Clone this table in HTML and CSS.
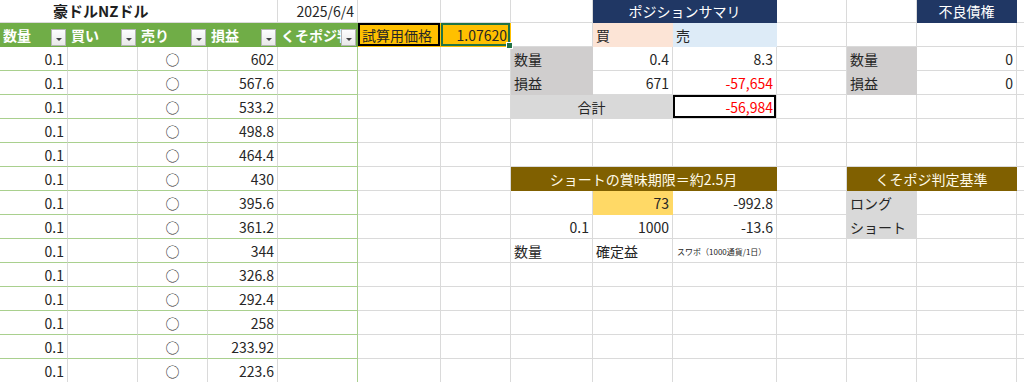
FILE: index.html
```html
<!DOCTYPE html>
<html lang="ja">
<head>
<meta charset="utf-8">
<title>豪ドルNZドル</title>
<link rel="stylesheet" href="styles.css">
</head>
<body>
<div class="sheet">
  <!-- row 1 -->
  <div class="cell title span4">豪ドルNZドル</div>
  <div class="cell r date">2025/6/4</div>
  <div class="cell"></div><div class="cell"></div><div class="cell"></div>
  <div class="cell navy span2">ポジションサマリ</div>
  <div class="cell"></div><div class="cell"></div>
  <div class="cell navy">不良債権</div>
  <div class="cell last"></div>

  <!-- row 2 -->
  <div class="cell hdr"><span class="ht">数量</span><span class="fb"><span class="tri"></span></span></div>
  <div class="cell hdr"><span class="ht">買い</span><span class="fb"><span class="tri"></span></span></div>
  <div class="cell hdr"><span class="ht">売り</span><span class="fb"><span class="tri"></span></span></div>
  <div class="cell hdr"><span class="ht">損益</span><span class="fb"><span class="tri"></span></span></div>
  <div class="cell hdr"><span class="ht">くそポジ判定</span><span class="fb"><span class="tri"></span></span></div>
  <div class="cell price-label">試算用価格</div>
  <div class="cell price-input r">1.07620</div>
  <div class="cell"></div>
  <div class="cell peach">買</div>
  <div class="cell blue">売</div>
  <div class="cell"></div><div class="cell"></div><div class="cell"></div>
  <div class="cell last"></div>

  <!-- row 3 -->
  <div class="cell t r">0.1</div><div class="cell t"></div><div class="cell t c">○</div><div class="cell t r">602</div><div class="cell t te"></div>
  <div class="cell"></div><div class="cell"></div>
  <div class="cell gray">数量</div>
  <div class="cell r">0.4</div>
  <div class="cell r">8.3</div>
  <div class="cell"></div>
  <div class="cell gray">数量</div>
  <div class="cell r">0</div>
  <div class="cell last"></div>

  <!-- row 4 -->
  <div class="cell t r">0.1</div><div class="cell t"></div><div class="cell t c">○</div><div class="cell t r">567.6</div><div class="cell t te"></div>
  <div class="cell"></div><div class="cell"></div>
  <div class="cell gray">損益</div>
  <div class="cell r">671</div>
  <div class="cell r neg">-57,654</div>
  <div class="cell"></div>
  <div class="cell gray">損益</div>
  <div class="cell r">0</div>
  <div class="cell last"></div>

  <!-- row 5 -->
  <div class="cell t r">0.1</div><div class="cell t"></div><div class="cell t c">○</div><div class="cell t r">533.2</div><div class="cell t te"></div>
  <div class="cell"></div><div class="cell"></div>
  <div class="cell light span2 c">合計</div>
  <div class="cell r neg total">-56,984</div>
  <div class="cell"></div><div class="cell"></div><div class="cell"></div>
  <div class="cell last"></div>

  <!-- row 6 -->
  <div class="cell t r">0.1</div><div class="cell t"></div><div class="cell t c">○</div><div class="cell t r">498.8</div><div class="cell t te"></div>
  <div class="cell"></div><div class="cell"></div><div class="cell"></div><div class="cell"></div><div class="cell"></div><div class="cell"></div><div class="cell"></div><div class="cell"></div>
  <div class="cell last"></div>

  <!-- row 7 -->
  <div class="cell t r">0.1</div><div class="cell t"></div><div class="cell t c">○</div><div class="cell t r">464.4</div><div class="cell t te"></div>
  <div class="cell"></div><div class="cell"></div><div class="cell"></div><div class="cell"></div><div class="cell"></div><div class="cell"></div><div class="cell"></div><div class="cell"></div>
  <div class="cell last"></div>

  <!-- row 8 -->
  <div class="cell t r">0.1</div><div class="cell t"></div><div class="cell t c">○</div><div class="cell t r">430</div><div class="cell t te"></div>
  <div class="cell"></div><div class="cell"></div>
  <div class="cell brown span3">ショートの賞味期限＝約2.5月</div>
  <div class="cell"></div>
  <div class="cell brown span2">くそポジ判定基準</div>
  <div class="cell last"></div>

  <!-- row 9 -->
  <div class="cell t r">0.1</div><div class="cell t"></div><div class="cell t c">○</div><div class="cell t r">395.6</div><div class="cell t te"></div>
  <div class="cell"></div><div class="cell"></div><div class="cell"></div>
  <div class="cell yellow r">73</div>
  <div class="cell r">-992.8</div>
  <div class="cell"></div>
  <div class="cell light">ロング</div>
  <div class="cell"></div>
  <div class="cell last"></div>

  <!-- row 10 -->
  <div class="cell t r">0.1</div><div class="cell t"></div><div class="cell t c">○</div><div class="cell t r">361.2</div><div class="cell t te"></div>
  <div class="cell"></div><div class="cell"></div>
  <div class="cell r">0.1</div>
  <div class="cell r">1000</div>
  <div class="cell r">-13.6</div>
  <div class="cell"></div>
  <div class="cell light">ショート</div>
  <div class="cell"></div>
  <div class="cell last"></div>

  <!-- row 11 -->
  <div class="cell t r">0.1</div><div class="cell t"></div><div class="cell t c">○</div><div class="cell t r">344</div><div class="cell t te"></div>
  <div class="cell"></div><div class="cell"></div>
  <div class="cell">数量</div>
  <div class="cell">確定益</div>
  <div class="cell small">スワポ（1000通貨/1日）</div>
  <div class="cell"></div><div class="cell"></div><div class="cell"></div>
  <div class="cell last"></div>

  <!-- row 12 -->
  <div class="cell t r">0.1</div><div class="cell t"></div><div class="cell t c">○</div><div class="cell t r">326.8</div><div class="cell t te"></div>
  <div class="cell"></div><div class="cell"></div><div class="cell"></div><div class="cell"></div><div class="cell"></div><div class="cell"></div><div class="cell"></div><div class="cell"></div>
  <div class="cell last"></div>

  <!-- row 13 -->
  <div class="cell t r">0.1</div><div class="cell t"></div><div class="cell t c">○</div><div class="cell t r">292.4</div><div class="cell t te"></div>
  <div class="cell"></div><div class="cell"></div><div class="cell"></div><div class="cell"></div><div class="cell"></div><div class="cell"></div><div class="cell"></div><div class="cell"></div>
  <div class="cell last"></div>

  <!-- row 14 -->
  <div class="cell t r">0.1</div><div class="cell t"></div><div class="cell t c">○</div><div class="cell t r">258</div><div class="cell t te"></div>
  <div class="cell"></div><div class="cell"></div><div class="cell"></div><div class="cell"></div><div class="cell"></div><div class="cell"></div><div class="cell"></div><div class="cell"></div>
  <div class="cell last"></div>

  <!-- row 15 -->
  <div class="cell t r">0.1</div><div class="cell t"></div><div class="cell t c">○</div><div class="cell t r">233.92</div><div class="cell t te"></div>
  <div class="cell"></div><div class="cell"></div><div class="cell"></div><div class="cell"></div><div class="cell"></div><div class="cell"></div><div class="cell"></div><div class="cell"></div>
  <div class="cell last"></div>

  <!-- row 16 -->
  <div class="cell t r">0.1</div><div class="cell t"></div><div class="cell t c">○</div><div class="cell t r">223.6</div><div class="cell t te"></div>
  <div class="cell"></div><div class="cell"></div><div class="cell"></div><div class="cell"></div><div class="cell"></div><div class="cell"></div><div class="cell"></div><div class="cell"></div>
  <div class="cell last"></div>
</div>
</body>
</html>
```

FILE: styles.css
```css
html, body {
  margin: 0;
  padding: 0;
  background: #ffffff;
}

body {
  font-family: "Noto Sans CJK JP", "Noto Sans", sans-serif;
  color: #262626;
}

.sheet {
  display: grid;
  grid-template-columns: 68px 70px 70px 70px 80px 83px 70px 82px 80px 104px 70px 70px 100px 7px;
  grid-template-rows: 23px repeat(15, 24px);
  width: 1024px;
  height: 382px;
  overflow: hidden;
}

.cell {
  box-sizing: border-box;
  border-right: 1px solid #dadada;
  border-bottom: 1px solid #dadada;
  padding: 0 3px;
  font-size: 14px;
  line-height: 20px;
  white-space: nowrap;
  overflow: hidden;
  display: flex;
  align-items: center;
  position: relative;
}

.last {
  border-right: none;
}

.r { justify-content: flex-end; }
.c { justify-content: center; }

.span2 { grid-column: span 2; }
.span3 { grid-column: span 3; }
.span4 { grid-column: span 4; }

/* title row */
.title {
  font-size: 15px;
  font-weight: bold;
  padding-left: 53px;
  color: #1f1f1f;
}

/* left table */
.hdr {
  background: #70ad47;
  border-color: transparent;
  color: #ffffff;
  font-weight: bold;
  padding: 0 1px 0 3px;
  justify-content: space-between;
}

.ht {
  flex: 1;
  min-width: 0;
  overflow: hidden;
}

.fb {
  flex: none;
  align-self: flex-end;
  width: 15px;
  height: 17px;
  margin-bottom: 0;
  box-sizing: border-box;
  border: 1px solid #b4b4b4;
  background: linear-gradient(#fdfdfd, #e9e9e9);
  display: flex;
  align-items: center;
  justify-content: center;
}

.tri {
  width: 0;
  height: 0;
  margin-top: 3px;
  border-left: 3px solid transparent;
  border-right: 3px solid transparent;
  border-top: 3px solid #444444;
}

.t {
  border-bottom-color: #a9d08e;
}

.te {
  border-right-color: #a9d08e;
}

/* price input */
.price-label {
  background: #ffc000;
  border-color: transparent;
  box-shadow: inset 0 0 0 2px #000000;
  padding-left: 4px;
}

.price-input {
  background: #ffc000;
  border-color: transparent;
  box-shadow: inset 0 0 0 2px #217346;
  overflow: visible;
  z-index: 2;
}

.price-input::after {
  content: "";
  position: absolute;
  right: -3px;
  bottom: -3px;
  width: 5px;
  height: 5px;
  background: #217346;
  border: 1px solid #ffffff;
}

/* summary blocks */
.navy {
  background: #203764;
  border-color: transparent;
  color: #ffffff;
  justify-content: center;
}

.brown {
  background: #806000;
  border-color: transparent;
  color: #fffbea;
  justify-content: center;
}

.peach {
  background: #fce4d6;
  border-color: transparent;
}

.blue {
  background: #ddebf7;
  border-color: transparent;
}

.gray {
  background: #d0cece;
  border-color: transparent;
}

.light {
  background: #d9d9d9;
  border-color: transparent;
}

.yellow {
  background: #ffd966;
  border-color: transparent;
}

.neg {
  color: #ff0000;
}

.total {
  box-shadow: inset 0 0 0 2px #000000;
}

.small {
  font-size: 8px;
  padding-left: 4px;
  padding-top: 2px;
}
```
